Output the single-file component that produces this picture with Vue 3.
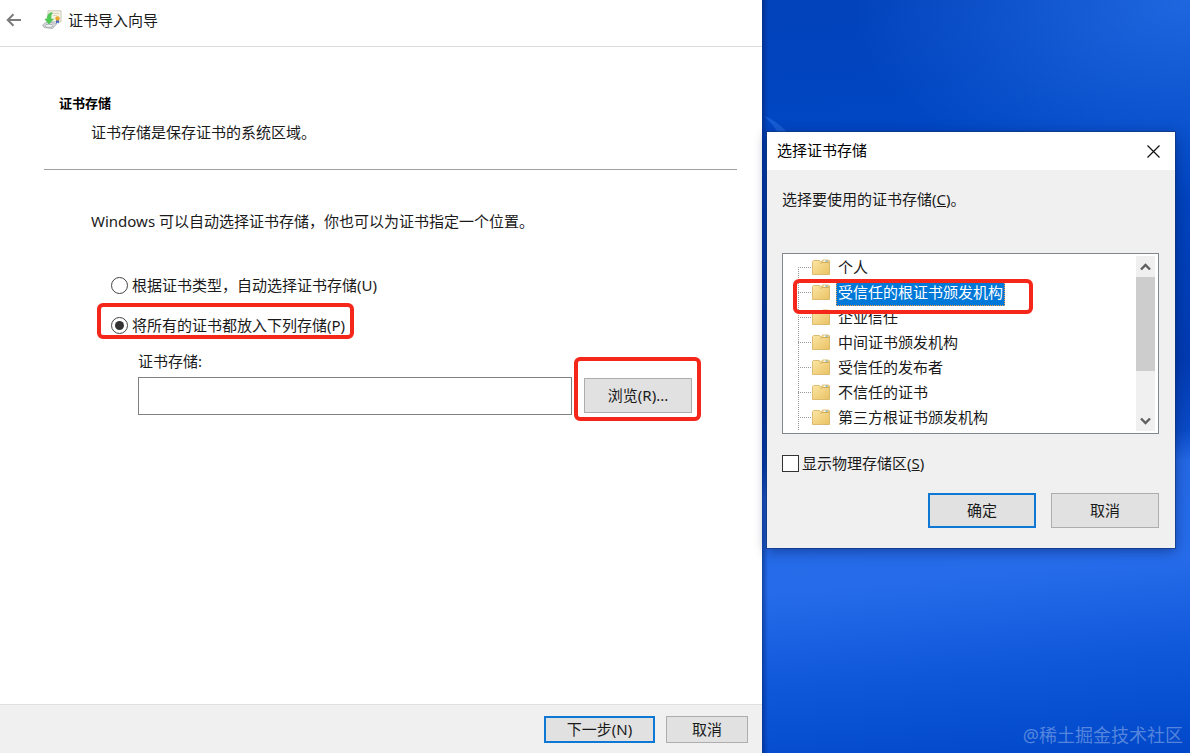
<script setup>
import { ref } from 'vue'

const mode = ref('manual')
const storePath = ref('')
const showPhysical = ref(false)
const selected = ref(1)
const stores = [
  '个人',
  '受信任的根证书颁发机构',
  '企业信任',
  '中间证书颁发机构',
  '受信任的发布者',
  '不信任的证书',
  '第三方根证书颁发机构',
]
</script>

<template>
  <div class="desktop">
    <main class="wizard">
      <header class="wizard-head">
        <button class="icon-btn" type="button" aria-label="返回">
          <svg width="16" height="14" viewBox="0 0 16 14" fill="none" stroke="#7c7c7c" stroke-width="2">
            <path d="M15 7H2M7.5 1.2L1.7 7l5.8 5.8" />
          </svg>
        </button>
        <svg class="cert-icon" width="20" height="20" viewBox="0 0 20 20">
          <path d="M6 .8h13v11H6z" fill="#f7f3e2" stroke="#c9c8bd" />
          <path d="M10 3.500h7M11 5.500h4" stroke="#d8d4c0" />
          <path d="M.5 15l5-3.500 9.500 2-4.500 5-8.500-1z" fill="#d4d8da" stroke="#a3aaad" stroke-width=".8" />
          <ellipse cx="7" cy="15.800" rx="3.800" ry="1.600" fill="#f6f8f8" stroke="#8f979b" stroke-width=".7" />
          <path d="M9.500 2.500C6.500 3 5 5.500 5.200 9H2.800l4 5 4.700-5H9C8.800 6 9 4 10.500 3z" fill="#4fca54" stroke="#4fba58" stroke-width=".6" />
          <path d="M14 9.500v4l1.500-1 1.500 1v-4z" fill="#3f69c4" />
          <circle cx="15.500" cy="8.500" r="2.200" fill="#e9a52c" />
        </svg>
        <h1>证书导入向导</h1>
      </header>

      <section class="wizard-body">
        <h2>证书存储</h2>
        <p class="sub">证书存储是保存证书的系统区域。</p>
        <hr />
        <p class="intro">Windows 可以自动选择证书存储，你也可以为证书指定一个位置。</p>

        <div class="options">
          <label class="option">
            <input v-model="mode" type="radio" name="mode" value="auto" />
            <span>根据证书类型，自动选择证书存储(U)</span>
          </label>
          <label class="option marked">
            <input v-model="mode" type="radio" name="mode" value="manual" />
            <span>将所有的证书都放入下列存储(P)</span>
          </label>
        </div>

        <div class="store">
          <label for="store-path">证书存储:</label>
          <div class="store-row">
            <input id="store-path" v-model="storePath" type="text" />
            <div class="marked browse">
              <button class="btn" type="button">浏览(R)...</button>
            </div>
          </div>
        </div>
      </section>

      <footer class="wizard-foot">
        <button class="btn primary next" type="button">下一步(N)</button>
        <button class="btn" type="button">取消</button>
      </footer>
    </main>

    <aside class="side">
      <svg class="streak" width="24" height="18" viewBox="0 0 24 18">
        <path d="M0 1Q12 5 24 18H14Q8 8 0 1z" fill="#3f86f5" opacity=".35" />
      </svg>
      <section class="dialog" role="dialog" aria-labelledby="dialog-title">
        <header class="dialog-head">
          <h2 id="dialog-title">选择证书存储</h2>
          <button class="icon-btn" type="button" aria-label="关闭">
            <svg width="13" height="13" viewBox="0 0 13 13" stroke="#111" stroke-width="1.200">
              <path d="M.5 .5l12 12M12.500 .5l-12 12" />
            </svg>
          </button>
        </header>
        <div class="dialog-body">
          <p>选择要使用的证书存储(<u>C</u>)。</p>
          <div class="list">
            <ul class="tree">
              <li v-for="(name, i) in stores" :key="name">
                <svg class="folder" width="18" height="17" viewBox="0 0 18 17">
                  <defs>
                    <linearGradient id="folder-fill" x1="0" y1="0" x2="1" y2="1">
                      <stop offset="0" stop-color="#fbe7a6" />
                      <stop offset="1" stop-color="#eac163" />
                    </linearGradient>
                  </defs>
                  <path d="M.5 2.500l1-1h6l1 1.500h1l1-2h6l1 1v13.500H.5z" fill="url(#folder-fill)" stroke="#d6b05b" stroke-width=".8" />
                  <path d="M8.500 5l1.500-1.500h7" fill="none" stroke="#c9a24c" stroke-width=".8" />
                  <path d="M11.500 1.500h3v1.300h-3z" fill="#fff" />
                  <path d="M13.500 1.500h2v1.300h-2z" fill="#6fb1d8" />
                </svg>
                <button
                  class="node"
                  :class="{ selected: selected === i }"
                  type="button"
                  @click="selected = i"
                >{{ name }}</button>
              </li>
            </ul>
            <div class="scrollbar">
              <svg width="11" height="8" viewBox="0 0 11 8" fill="none" stroke="#606060" stroke-width="2.400">
                <path d="M1 6.500l4.500-4.500 4.500 4.500" />
              </svg>
              <div class="thumb"></div>
              <svg class="down" width="11" height="8" viewBox="0 0 11 8" fill="none" stroke="#606060" stroke-width="2.400">
                <path d="M1 1.500l4.500 4.500 4.500-4.500" />
              </svg>
            </div>
            <div class="list-mark"></div>
          </div>
          <label class="physical">
            <input v-model="showPhysical" type="checkbox" />
            <span>显示物理存储区(<u>S</u>)</span>
          </label>
          <div class="actions">
            <button class="btn primary" type="button">确定</button>
            <button class="btn" type="button">取消</button>
          </div>
        </div>
      </section>
      <p class="watermark">@稀土掘金技术社区</p>
    </aside>
  </div>
</template>

<style>
body {
  margin: 0;
}
</style>

<style scoped>
.desktop {
  display: grid;
  grid-template-columns: minmax(0, 762fr) minmax(0, 428fr);
  min-height: 100vh;
  font: 15px/24px "Noto Sans", "Noto Sans CJK SC", sans-serif;
  color: #1a1a1a;
}
.desktop * {
  box-sizing: border-box;
}
h1, h2, p, ul {
  margin: 0;
  padding: 0;
}
button, input {
  font: inherit;
  color: inherit;
  margin: 0;
}
.icon-btn {
  display: flex;
  padding: 0;
  border: 0;
  background: none;
}
.wizard {
  display: flex;
  flex-direction: column;
  background: #fff;
}
.wizard-head {
  display: flex;
  align-items: center;
  height: 47px;
  padding: 0 6px 6px;
  border-bottom: 1px solid #dcdcdc;
}
.cert-icon {
  margin: 0 6px 0 20px;
}
h1 {
  font-size: 15px;
  font-weight: 400;
}
.wizard-body {
  flex: 1;
  padding: 46px 25px 24px 44px;
}
.wizard-body h2 {
  margin-left: 15px;
  font-size: 13px;
  line-height: 20px;
  color: #000;
}
.sub {
  margin: 7px 0 0 47px;
}
hr {
  height: 1px;
  margin: 25px 0 39px;
  border: 0;
  background: #a0a0a0;
}
.intro {
  margin-left: 47px;
}
.options {
  display: flex;
  flex-direction: column;
  align-items: flex-start;
  gap: 6px;
  margin: 40px 0 0 53px;
}
.option {
  display: flex;
  align-items: center;
  gap: 4px;
  padding-left: 14px;
}
.marked {
  border: 4px solid #f5261a;
  border-radius: 6px;
}
.option.marked {
  height: 36px;
  padding: 8px 5px 0 10px;
}
.option input {
  appearance: none;
  display: grid;
  place-items: center;
  width: 17px;
  height: 17px;
  border: 1px solid #444;
  border-radius: 50%;
  background: #fff;
}
.option input:checked::before {
  content: "";
  width: 9px;
  height: 9px;
  border-radius: 50%;
  background: #333;
}
.store {
  margin: 10px 36px 0 94px;
}
.store > label {
  display: block;
}
.store-row {
  display: flex;
  align-items: center;
  gap: 2px;
  margin-top: -16px;
}
.store-row input {
  flex: 1;
  min-width: 0;
  height: 38px;
  margin-top: 14px;
  padding: 0 8px;
  border: 1px solid #808080;
  background: #fff;
}
.browse {
  padding: 17px 5px 4px 6px;
}
.btn {
  min-width: 108px;
  height: 35px;
  padding: 0 8px 2px;
  border: 1px solid #adadad;
  background: #e1e1e1;
  line-height: 20px;
}
.btn.primary {
  border: 2px solid #0f78d4;
}
.wizard-foot {
  display: flex;
  justify-content: flex-end;
  gap: 11px;
  padding: 11px 14px 10px;
  border-top: 1px solid #dfdfdf;
  background: #f0f0f0;
}
.wizard-foot .btn {
  min-width: 82px;
  height: 27px;
}
.wizard-foot .next {
  min-width: 111px;
}
.side {
  position: relative;
  display: flex;
  flex-direction: column;
  justify-content: space-between;
  padding: 132px 15px 4px 5px;
  background:
    linear-gradient(90deg, rgba(0, 30, 100, .5), transparent 6px),
    radial-gradient(ellipse 340px 200px at 100% 0, rgba(40, 115, 235, .75), transparent),
    linear-gradient(175deg, #0242ba 0, #0047c4 20%, #023ab0 50%, #0a4ac6 59%, #2468e4 63%, #266cea 75%, #0f58da 87%, #0048c9 100%);
}
.streak {
  position: absolute;
  left: 2px;
  top: 115px;
}
.dialog {
  position: relative;
  background: #f0f0f0;
  box-shadow: 0 0 0 1px rgba(20, 50, 110, .6), 0 3px 12px rgba(0, 15, 70, .45);
}
.dialog-head {
  display: flex;
  align-items: center;
  justify-content: space-between;
  height: 38px;
  padding: 0 15px 0 10px;
  background: #fff;
}
.dialog-head h2 {
  font-size: 15px;
  line-height: 22px;
  padding-bottom: 2px;
  font-weight: 400;
  color: #000;
}
.dialog-body {
  padding: 17px 16px 20px 15px;
}
.list {
  position: relative;
  display: flex;
  justify-content: space-between;
  height: 181px;
  margin-top: 42px;
  padding: 2px;
  border: 1px solid #828790;
  background: #fff;
}
.tree {
  list-style: none;
  margin-left: 13px;
  overflow: hidden;
  background: repeating-linear-gradient(#999 0 1px, transparent 1px 2px) 0 11px / 1px 100% no-repeat;
}
.tree li {
  display: flex;
  align-items: center;
  gap: 6px;
  height: 25px;
  padding-left: 14px;
  background: repeating-linear-gradient(90deg, #999 0 1px, transparent 1px 2px) 0 11px / 14px 1px no-repeat;
}
.folder {
  flex: none;
  margin-bottom: 2px;
}
.node {
  height: 25px;
  padding: 0 2px 2px;
  border: 0;
  background: none;
  line-height: 23px;
  white-space: nowrap;
}
.node.selected {
  border: 1px dotted #f0a050;
  padding: 0 1px 2px;
  background: #0078d7;
  color: #fff;
  line-height: 21px;
}
.scrollbar {
  display: flex;
  flex-direction: column;
  align-items: center;
  width: 19px;
  margin-right: 1px;
  padding: 7px 0 6px;
  background: #f0f0f0;
}
.thumb {
  width: 100%;
  height: 94px;
  margin-top: 6px;
  background: #cdcdcd;
}
.down {
  margin-top: auto;
}
.list-mark {
  position: absolute;
  left: 10px;
  top: 25px;
  width: 240px;
  height: 35px;
  border: 4px solid #f5261a;
  border-radius: 6px;
}
.physical {
  display: flex;
  align-items: center;
  gap: 3px;
  margin-top: 17px;
}
.physical input {
  appearance: none;
  width: 17px;
  height: 17px;
  border: 1px solid #333;
  background: #fff;
}
.physical input:checked {
  background: #0078d7;
}
.actions {
  display: flex;
  justify-content: flex-end;
  gap: 15px;
  margin-top: 18px;
}
.watermark {
  margin-right: -8px;
  text-align: right;
  font-size: 18px;
  line-height: 28px;
  color: rgba(190, 205, 240, .45);
}
</style>
